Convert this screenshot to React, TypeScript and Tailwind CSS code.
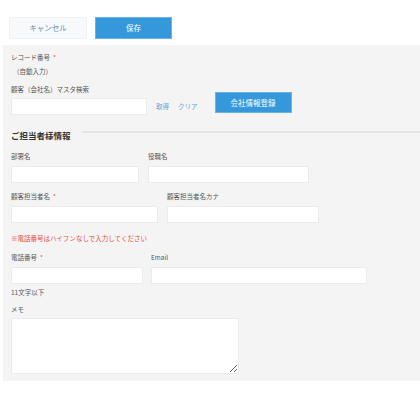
import React from 'react';

const Req = () => <span className="ml-[3px] text-[#e74c3c]">*</span>;

const Label = ({ children, className = '' }: { children: React.ReactNode; className?: string }) => (
    <div className={`h-[10px] text-[6.5px] leading-[10px] text-[#555] ${className}`}>{children}</div>
);

const Input = ({ w }: { w: string }) => (
    <input className={`block h-[17px] ${w} border border-[#ebebeb] bg-white outline-none`} />
);

export default function App() {
    return (
        <div className="min-h-[400px] w-[420px] bg-white font-['Noto_Sans_CJK_JP',sans-serif]">
            {/* top buttons */}
            <div className="flex gap-[8px] pl-[9px] pt-[17px]">
                <button className="h-[22px] w-[78px] border border-[#eef1f4] bg-[#f7f9fa] text-[7.5px] text-[#6d8fb3]">
                    キャンセル
                </button>
                <button className="h-[22px] w-[77px] border border-[#66b3ea] bg-[#3498db] text-[7.5px] text-white">
                    保存
                </button>
            </div>

            {/* form panel */}
            <div className="ml-[3px] mt-[6px] bg-[#f4f4f4] pb-[7px] pl-[8px] pt-[7px]">
                <Label>
                    レコード番号
                    <Req />
                </Label>
                <Label className="ml-[2px] mt-[4px] text-[#444]">（自動入力）</Label>

                <div className="mt-[8px] flex items-end">
                    <div>
                        <Label className="mb-[4px]">顧客（会社名）マスタ検索</Label>
                        <Input w="w-[136px]" />
                    </div>
                    <div className="mb-[4px] ml-[9px] flex gap-[9px] text-[6.5px] leading-[10px] text-[#5fa3d6]">
                        <span>取得</span>
                        <span>クリア</span>
                    </div>
                    <button className="mb-[2px] ml-[17px] h-[21px] w-[77px] border border-[#66b3ea] bg-[#3498db] text-[7.5px] text-white">
                        会社情報登録
                    </button>
                </div>

                {/* section heading */}
                <div className="mt-[14px] flex items-center">
                    <div className="h-[12px] text-[8.5px] font-bold leading-[12px] text-[#333]">ご担当者様情報</div>
                    <div className="mb-[7px] ml-[11px] h-[2px] flex-1 bg-[#e4e4e4]" />
                </div>

                <div className="mt-[10px] flex gap-[9px]">
                    <div>
                        <Label className="mb-[5px]">部署名</Label>
                        <Input w="w-[128px]" />
                    </div>
                    <div>
                        <Label className="mb-[5px]">役職名</Label>
                        <Input w="w-[161px]" />
                    </div>
                </div>

                <div className="mt-[8px] flex gap-[9px]">
                    <div>
                        <Label className="mb-[5px]">
                            顧客担当者名
                            <Req />
                        </Label>
                        <Input w="w-[147px]" />
                    </div>
                    <div>
                        <Label className="mb-[5px]">顧客担当者名カナ</Label>
                        <Input w="w-[152px]" />
                    </div>
                </div>

                <div className="mt-[10px] h-[10px] text-[6.5px] leading-[10px] text-[#e74c3c]">
                    ※電話番号はハイフンなしで入力してください
                </div>

                <div className="mt-[9px] flex gap-[8px]">
                    <div>
                        <Label className="mb-[5px]">
                            電話番号
                            <Req />
                        </Label>
                        <Input w="w-[132px]" />
                    </div>
                    <div>
                        <Label className="mb-[5px]">Email</Label>
                        <Input w="w-[216px]" />
                    </div>
                </div>
                <Label className="mt-[3px] text-[#444]">11文字以下</Label>

                <Label className="mb-[4px] mt-[7px]">メモ</Label>
                <textarea className="block h-[56px] w-[228px] border border-[#ebebeb] bg-white outline-none" />
            </div>
        </div>
    );
}
